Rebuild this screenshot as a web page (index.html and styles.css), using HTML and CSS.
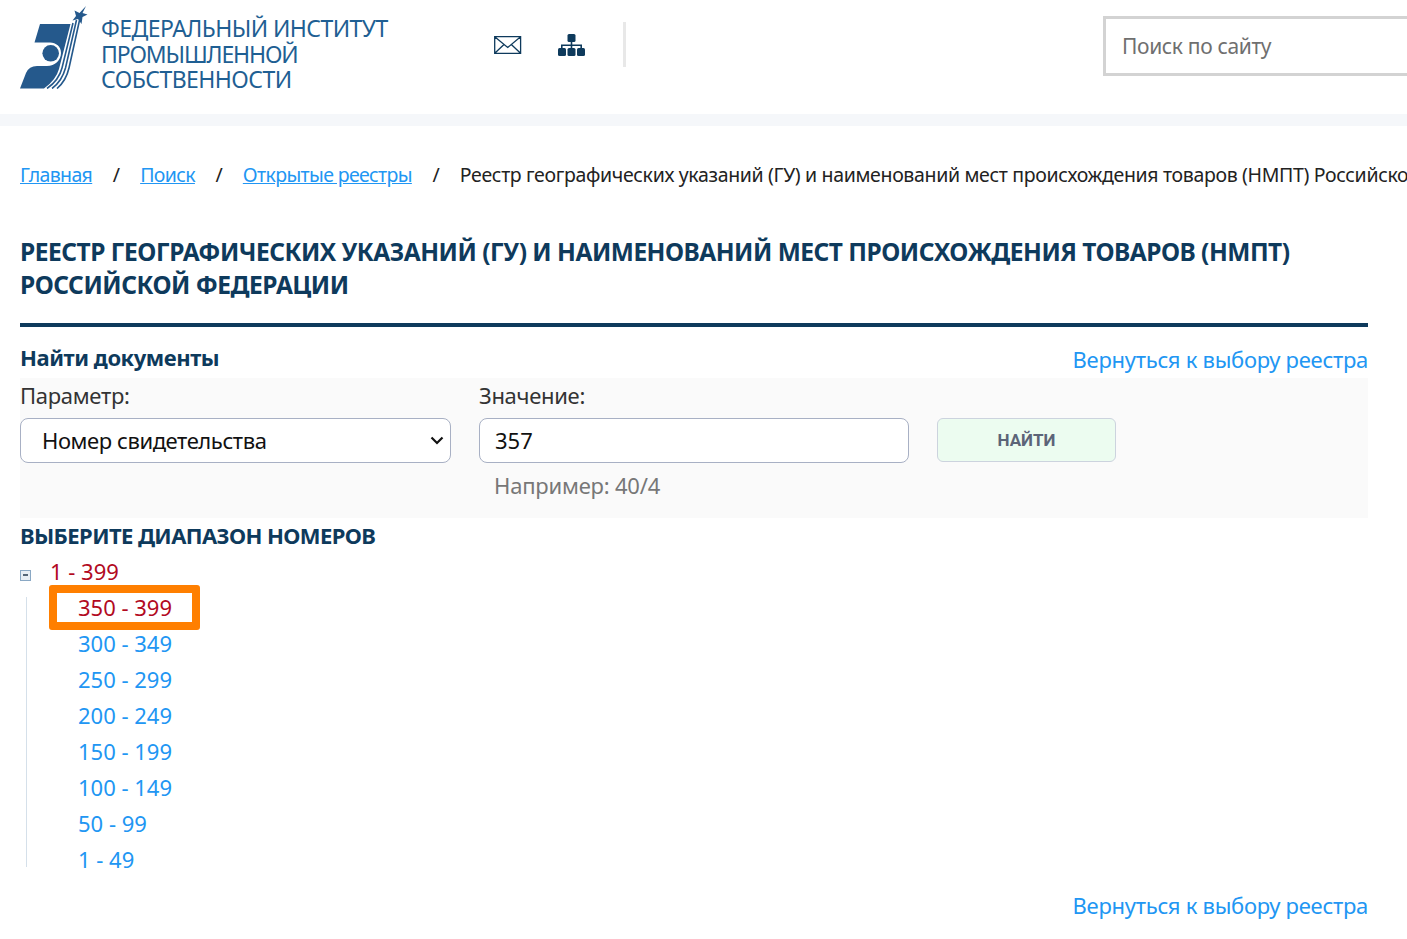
FILE: index.html
```html
<!DOCTYPE html>
<html lang="ru">
<head>
<meta charset="utf-8">
<title>Реестр ГУ и НМПТ</title>
<link rel="stylesheet" href="styles.css">
</head>
<body>
<header class="site-header">
  <a class="brand" href="#">
    <svg class="logo" viewBox="0 0 70 84" width="70" height="84" aria-hidden="true">
      <path fill="#25598c" d="M20 19H50.500L39 64Q36 75 24 83.500H0L6 68Q9 61 17 61H27C35 61 41 55 41 48C41 41 36 38 30 37.500L14.500 37.500Z"/>
      <circle fill="#25598c" cx="30.700" cy="48.300" r="8.300"/>
      <path fill="none" stroke="#25598c" stroke-width="1.600" d="M53 18 42 63Q39 75 27 83.500M56.500 15 45.500 63Q42 76 32 83.500M60 13 49 63Q46 76 37 83.500"/>
      <path fill="#25598c" d="M66 1 62.500 8 67.500 9.500 62.500 12 61.500 19 58 14 52.500 15.500 56 11 54.500 5.500 59.500 8Z"/>
    </svg>
    <span class="brand-name"><span class="brand-line">ФЕДЕРАЛЬНЫЙ ИНСТИТУТ</span><span class="brand-line brand-line-tight">ПРОМЫШЛЕННОЙ</span><span class="brand-line">СОБСТВЕННОСТИ</span></span>
  </a>
  <div class="header-icons">
    <svg width="28" height="20" viewBox="0 0 28 20" aria-hidden="true"><path fill="none" stroke="#0e3a5c" stroke-width="1.300" d="M.7 1.700H26.600V18.300H.7ZM1 2 13.700 12.500 26.300 2M1 18 10 9.500M26.300 18 17.300 9.500"/></svg>
    <svg width="27" height="22" viewBox="0 0 27 22" aria-hidden="true"><g fill="#0e3a5c"><rect x="9.500" y="0" width="8" height="8" rx="1.500"/><rect x="0" y="14" width="8" height="8" rx="1.500"/><rect x="9.500" y="14" width="8" height="8" rx="1.500"/><rect x="19" y="14" width="8" height="8" rx="1.500"/><path d="M12.700 7h1.600v3.500H24v4h-1.600v-2.500H14.300v2.500h-1.600v-2.500H4.600v2.500H3v-4h9.700Z"/></g></svg>
    <span class="divider"></span>
  </div>
  <input class="site-search" type="text" placeholder="Поиск по сайту">
</header>
<div class="strip"></div>
<main class="content">
  <nav class="crumbs">
    <a href="#">Главная</a><span class="sep">/</span><a href="#">Поиск</a><span class="sep">/</span><a href="#">Открытые реестры</a><span class="sep">/</span><span>Реестр географических указаний (ГУ) и наименований мест происхождения товаров (НМПТ) Российской Федерации</span>
  </nav>
  <h1>РЕЕСТР ГЕОГРАФИЧЕСКИХ УКАЗАНИЙ (ГУ) И НАИМЕНОВАНИЙ МЕСТ ПРОИСХОЖДЕНИЯ ТОВАРОВ (НМПТ) РОССИЙСКОЙ ФЕДЕРАЦИИ</h1>
  <div class="find-head">
    <h2>Найти документы</h2>
    <a class="back" href="#">Вернуться к выбору реестра</a>
  </div>
  <form class="search-form">
    <div class="field field-param">
      <label>Параметр:</label>
      <select><option>Номер свидетельства</option></select>
    </div>
    <div class="field field-value">
      <label>Значение:</label>
      <input type="text" value="357">
      <div class="hint">Например: 40/4</div>
    </div>
    <button type="button" class="find">НАЙТИ</button>
  </form>
  <h3>ВЫБЕРИТЕ ДИАПАЗОН НОМЕРОВ</h3>
  <div class="tree">
    <div class="tree-root">
      <span class="toggle"></span><a class="active" href="#">1 - 399</a>
    </div>
    <ul>
      <li class="selected"><a class="active" href="#">350 - 399</a></li>
      <li><a href="#">300 - 349</a></li>
      <li><a href="#">250 - 299</a></li>
      <li><a href="#">200 - 249</a></li>
      <li><a href="#">150 - 199</a></li>
      <li><a href="#">100 - 149</a></li>
      <li><a href="#">50 - 99</a></li>
      <li><a href="#">1 - 49</a></li>
    </ul>
  </div>
  <div class="foot-link"><a class="back" href="#">Вернуться к выбору реестра</a></div>
</main>
</body>
</html>
```
FILE: styles.css
```css
*, *::before, *::after { box-sizing: border-box; }
html, body { margin: 0; height: 939px; overflow: hidden; background: #fff; }
body { font-family: "Noto Sans", "Open Sans", sans-serif; color: #111; width: 1407px; }
a { color: #2196f3; }

.site-header { height: 114px; display: flex; align-items: flex-start; }
.brand { display: flex; text-decoration: none; margin: 5px 0 0 20px; flex: none; }
.logo { display: block; }
.brand-name { width: 287px; margin: 11px 0 0 11px; font-size: 23px; line-height: 25.500px; color: #1f5f93; white-space: nowrap; letter-spacing: -.55px; }
.brand-line { display: block; height: 25.500px; }
.brand-line-tight { letter-spacing: -1.150px; }
.header-icons { display: flex; align-items: center; margin: 22px 0 0 106px; height: 45px; }
.header-icons svg:nth-child(2) { margin-left: 36px; }
.divider { width: 3px; height: 45px; background: #e8e8e8; margin-left: 38px; }
.site-search { margin: 16px 0 0 auto; width: 304px; height: 60px; border: 3px solid #d3d3d3; border-right: 0; padding: 0 16px; font: 21px "Noto Sans", sans-serif; letter-spacing: -.35px; flex: none; }
.site-search::placeholder { color: #6f6f6f; opacity: 1; }
.strip { height: 12px; background: #f5f7fa; }

.content { padding: 0 39px 0 20px; }
.crumbs { margin-top: 37px; height: 24px; font-size: 19.500px; line-height: 24px; letter-spacing: -.34px; white-space: nowrap; color: #222; }
.crumbs a { letter-spacing: -.64px; }
.crumbs .sep { margin: 0 20.500px; }
h1 { margin: 48px 0 0; padding-bottom: 22px; border-bottom: 4px solid #0e3a5c; font-size: 24.500px; line-height: 33px; letter-spacing: -.5px; font-weight: 700; color: #0e3a5c; }
.find-head { display: flex; justify-content: space-between; height: 51px; padding-top: 17px; }
h2 { margin: -1px 0 0; font-size: 22px; line-height: 28px; letter-spacing: -.45px; color: #0e3a5c; }
.back { font-size: 22px; line-height: 28px; letter-spacing: -.27px; text-decoration: none; }
.find-head .back { margin-top: 1px; }
.search-form { height: 140px; background: #fafafa; display: flex; align-items: flex-start; }
.field { display: flex; flex-direction: column; }
.field-param { width: 431px; }
.field-value { width: 430px; margin-left: 28px; }
.field label { font-size: 22px; line-height: 28px; height: 40px; padding-top: 3px; letter-spacing: -.3px; color: #333; }
.field select, .field input { height: 45px; border: 1px solid #a8b0c4; border-radius: 8px; background: #fff; font: 22px "Noto Sans", sans-serif; color: #111; padding-bottom: 2px; }
.field select { appearance: none; padding-left: 21px; letter-spacing: -.42px; background: #fff url("data:image/svg+xml,%3Csvg xmlns='http://www.w3.org/2000/svg' width='14' height='9' viewBox='0 0 14 9'%3E%3Cpath fill='none' stroke='%23111' stroke-width='2.200' d='M1.500 1.500 7 7l5.500-5.500'/%3E%3C/svg%3E") no-repeat right 6px center; }
.field input { padding-left: 15px; padding-right: 16px; }
.hint { font-size: 22px; line-height: 28px; letter-spacing: -.2px; color: #777; margin: 8px 0 0 15px; }
.find { margin: 40px 0 0 28px; width: 179px; height: 44px; background: #ecfcf0; border: 1px solid #ccd3de; border-radius: 6px; font: 700 17px Roboto, sans-serif; color: #5c6478; }
h3 { margin: 3px 0 0; font-size: 22px; line-height: 28px; letter-spacing: -.6px; font-weight: 700; color: #0e3a5c; }
.tree { margin-top: 4px; font-size: 22px; line-height: 36px; }
.tree a { text-decoration: none; }
.tree a.active { color: #b20a1f; }
.tree-root { display: flex; align-items: center; height: 36px; }
.toggle { width: 11px; height: 11px; margin: 9px 19px 0 0; border: 1px solid #8aa8c4; background: #e8eef4; position: relative; }
.toggle::after { content: ""; position: absolute; left: 2px; top: 3px; width: 5px; height: 2px; background: #567; }
.tree ul { list-style: none; margin: 0 0 0 6px; padding: 0 0 0 52px; height: 288px; background: linear-gradient(#d5e0ea, #d5e0ea) no-repeat 0 8px / 1px 270px; }
.tree li { height: 36px; position: relative; }
.selected::before { content: ""; position: absolute; left: -29px; top: -4px; width: 151px; height: 45px; border: 8px solid #ff7f00; border-radius: 3px; }
.foot-link { display: flex; justify-content: flex-end; margin-top: 14px; }
```
